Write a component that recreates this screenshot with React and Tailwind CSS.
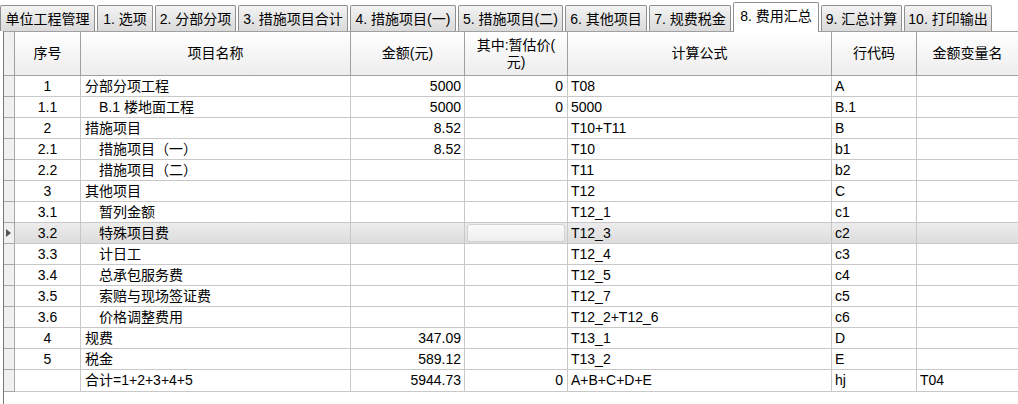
import React from "react";

const tabs = [
  { t: "单位工程管理", w: "w-[95px]" },
  { t: "1. 选项", w: "w-[56px]" },
  { t: "2. 分部分项", w: "w-[81px]" },
  { t: "3. 措施项目合计", w: "w-[110px]" },
  { t: "4. 措施项目(一)", w: "w-[106px]" },
  { t: "5. 措施项目(二)", w: "w-[105px]" },
  { t: "6. 其他项目", w: "w-[82px]" },
  { t: "7. 规费税金", w: "w-[82px]" },
  { t: "8. 费用汇总", w: "w-[86px]", active: true },
  { t: "9. 汇总计算", w: "w-[81px]" },
  { t: "10. 打印输出", w: "w-[88px]" },
];

const rows = [
  ["1", "分部分项工程", 0, "5000", "0", "T08", "A", ""],
  ["1.1", "B.1 楼地面工程", 1, "5000", "0", "5000", "B.1", ""],
  ["2", "措施项目", 0, "8.52", "", "T10+T11", "B", ""],
  ["2.1", "措施项目（一）", 1, "8.52", "", "T10", "b1", ""],
  ["2.2", "措施项目（二）", 1, "", "", "T11", "b2", ""],
  ["3", "其他项目", 0, "", "", "T12", "C", ""],
  ["3.1", "暂列金额", 1, "", "", "T12_1", "c1", ""],
  ["3.2", "特殊项目费", 1, "", "", "T12_3", "c2", "", true],
  ["3.3", "计日工", 1, "", "", "T12_4", "c3", ""],
  ["3.4", "总承包服务费", 1, "", "", "T12_5", "c4", ""],
  ["3.5", "索赔与现场签证费", 1, "", "", "T12_7", "c5", ""],
  ["3.6", "价格调整费用", 1, "", "", "T12_2+T12_6", "c6", ""],
  ["4", "规费", 0, "347.09", "", "T13_1", "D", ""],
  ["5", "税金", 0, "589.12", "", "T13_2", "E", ""],
  ["", "合计=1+2+3+4+5", 0, "5944.73", "0", "A+B+C+D+E", "hj", "T04"],
];

const cols = "grid grid-cols-[11px_66px_270px_114px_103px_264px_85px_101px]";

export default function App() {
  return (
    <div
      className="w-[1018px] h-[404px] bg-white overflow-hidden text-[14px] text-black"
      style={{ fontFamily: '"Liberation Sans", "Noto Sans CJK SC", sans-serif' }}
    >
      {/* tab bar */}
      <div className="flex items-end h-[31px] gap-[2px] relative z-10">
        {tabs.map((tb) =>
          tb.active ? (
            <div
              key={tb.t}
              className={`${tb.w} h-[30px] -mb-[1px] bg-white border border-b-0 border-[#8f8f8f] rounded-t-[2px] flex items-center justify-center leading-none pb-[3px]`}
            >
              {tb.t}
            </div>
          ) : (
            <div
              key={tb.t}
              className={`${tb.w} h-[26px] bg-gradient-to-b from-[#f3f3f3] to-[#dadada] border border-b-0 border-[#8f8f8f] rounded-t-[2px] flex items-center justify-center leading-none`}
            >
              {tb.t}
            </div>
          )
        )}
      </div>

      {/* grid */}
      <div className="ml-[3px] border-l border-[#7a7a7a] h-[373px]">
        {/* header */}
        <div className={`${cols} h-[45px] border-t border-b border-[#a0a0a0] bg-gradient-to-b from-white to-[#ededed]`}>
          <div className="border-r border-[#a0a0a0] bg-[#f0f0f0]" />
          <div className="border-r border-[#a0a0a0] flex items-center justify-center">序号</div>
          <div className="border-r border-[#a0a0a0] flex items-center justify-center">项目名称</div>
          <div className="border-r border-[#a0a0a0] flex items-center justify-center">金额(元)</div>
          <div className="border-r border-[#a0a0a0] flex items-center justify-center text-center leading-[17px] px-[10px]">
            其中:暂估价(
            <br />
            元)
          </div>
          <div className="border-r border-[#a0a0a0] flex items-center justify-center">计算公式</div>
          <div className="border-r border-[#a0a0a0] flex items-center justify-center">行代码</div>
          <div className="flex items-center justify-center">金额变量名</div>
        </div>

        {rows.map((r, i) => {
          const sel = r[8];
          const cell = "border-r border-b border-[#c8c8c8] flex items-center whitespace-nowrap overflow-hidden";
          return (
            <div
              key={i}
              className={`${cols} h-[21px] ${sel ? "bg-gradient-to-b from-[#ececec] to-[#dcdcdc]" : ""}`}
            >
              <div className="border-r border-b border-[#a8a8a8] bg-[#f0f0f0] flex items-center pl-[2px]">
                {sel ? (
                  <svg width="5" height="8" viewBox="0 0 5 8">
                    <path d="M0 0 L5 4 L0 8 Z" fill="#555" />
                  </svg>
                ) : null}
              </div>
              <div className={`${cell} justify-center`}>{r[0]}</div>
              <div className={`${cell} ${r[2] ? "pl-[18px]" : "pl-[4px]"}`}>{r[1]}</div>
              <div className={`${cell} justify-end pr-[3px]`}>{r[3]}</div>
              {sel ? (
                <div className="border-r border-b border-[#c8c8c8] flex items-center justify-center">
                  <div className="w-[98px] h-[18px] rounded-[3px] border border-[#d2d2d2] bg-gradient-to-b from-[#fafafa] to-[#eeeeee]" />
                </div>
              ) : (
                <div className={`${cell} justify-end pr-[4px]`}>{r[4]}</div>
              )}
              <div className={`${cell} pl-[3px]`}>{r[5]}</div>
              <div className={`${cell} pl-[3px]`}>{r[6]}</div>
              <div className="border-b border-[#c8c8c8] flex items-center pl-[3px]">{r[7]}</div>
            </div>
          );
        })}
      </div>
    </div>
  );
}
